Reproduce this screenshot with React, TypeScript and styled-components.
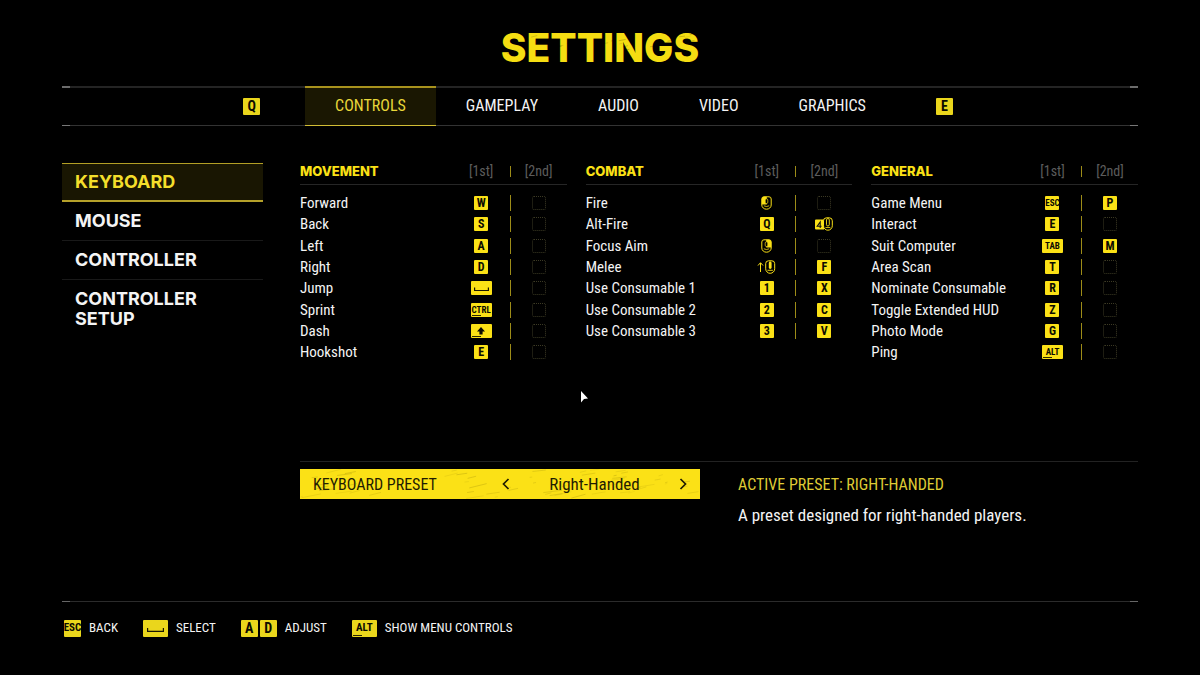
import React from 'react';
import styled, { createGlobalStyle, css } from 'styled-components';

const YELLOW = '#fbe116';
const GOLD = '#ead61c';
const CONDENSED = '"Roboto Condensed", Roboto, "Liberation Sans", sans-serif';
const WIDE = 'Inter, "Liberation Sans", sans-serif';

const rule = (y: string, h: number, tone: string, end: string) =>
  `linear-gradient(90deg, ${end} 8px, ${tone} 8px, ${tone} calc(100% - 8px), ${end} calc(100% - 8px)) 0 ${y} / 100% ${h}px no-repeat`;

const GlobalStyle = createGlobalStyle`
  * { box-sizing: border-box; }
  body { margin: 0; background: #000; color: #f4f4f4; font-family: ${CONDENSED}; }
  button { font: inherit; color: inherit; background: none; border: 0; padding: 0; cursor: pointer; }
`;

const Page = styled.div`
  position: relative;
  display: flex;
  flex-direction: column;
  min-height: 100vh;
  padding: 0 62px;
`;

const TitleBar = styled.header`
  display: flex;
  justify-content: center;
  align-items: center;
  height: 86px;
  padding-top: 10px;
`;

const Title = styled.h1`
  position: relative;
  margin: 0;
  font: 800 39px/48px ${WIDE};
  color: #f5dd12;
`;

const Texture = styled.svg`
  position: absolute;
  inset: 0;
  width: 100%;
  height: 100%;
  pointer-events: none;
`;

const TopNav = styled.nav`
  display: flex;
  justify-content: center;
  align-items: center;
  height: 40px;
  padding-right: 4px;
  background: ${rule('top', 2, '#242424', '#6c6c6c')}, ${rule('bottom', 1, '#333', '#777')};
`;

const TabList = styled.div`
  display: flex;
  align-self: stretch;
  margin: 0 40px 0 45px;
`;

const Tab = styled.button<{ $active?: boolean }>`
  padding: 0 30px 2px;
  font-size: 16px;
  line-height: 20px;
  border-top: 2px solid transparent;
  border-bottom: 1px solid transparent;
  ${(p) =>
    p.$active &&
    css`
      color: #e9d83a;
      background: #1a1702;
      border-top-color: #a8921d;
      border-bottom-color: #d2bd35;
    `}
`;

const Main = styled.main`
  display: grid;
  grid-template-columns: 201px minmax(0, 1fr);
  column-gap: 37px;
  padding-top: 33px;
`;

const SideNav = styled.nav`
  display: flex;
  flex-direction: column;
  padding-top: 4px;
`;

const SideItem = styled.button<{ $active?: boolean }>`
  padding: 9px 60px 9px 13px;
  font: 700 18px/20px ${WIDE};
  text-align: left;
  border-bottom: 1px solid #191919;
  &:last-child { border-bottom: 0; }
  ${(p) =>
    p.$active &&
    css`
      padding-top: 8px;
      padding-bottom: 8px;
      color: #f3de2b;
      background: #191602;
      border-top: 1px solid #b39f25;
      border-bottom: 2px solid #b5a12a;
    `}
`;

const Content = styled.div`
  display: flex;
  flex-direction: column;
`;

const BindingGrid = styled.section`
  display: grid;
  grid-template-columns: repeat(3, minmax(0, 1fr));
  align-items: start;
  column-gap: 19px;
  min-height: 302px;
`;

const BindingTable = styled.table`
  width: 100%;
  table-layout: fixed;
  border-collapse: collapse;
  font-size: 14px;
  line-height: 16px;
  th, td { padding: 0; }
  thead tr { height: 25px; border-bottom: 1px solid #262626; }
  tbody::before { content: ''; display: block; height: 8px; }
`;

const GroupName = styled.th`
  font: 800 13px/16px ${WIDE};
  text-align: left;
  color: ${YELLOW};
`;

const SlotHead = styled.th<{ $last?: boolean }>`
  width: ${(p) => (p.$last ? 56 : 57)}px;
  font-weight: 400;
  text-align: center;
  color: #5c5c5c;
`;

const DividerHead = styled.th`
  width: 1px;
`;

const Divider = styled.span<{ $short?: boolean }>`
  display: block;
  width: 1px;
  height: ${(p) => (p.$short ? 11 : 16)}px;
  background: #9d8c18;
`;

const BindingRow = styled.tr`
  height: 21px;
  &:nth-child(3n) { height: 22px; }
`;

const ActionName = styled.th`
  font-size: 15px;
  font-weight: 400;
  text-align: left;
  white-space: nowrap;
`;

const SlotButton = styled.button`
  display: flex;
  justify-content: center;
  align-items: center;
  width: 100%;
  height: 21px;
`;

const EmptySlot = styled.span`
  width: 14px;
  height: 14px;
  border: 1px dotted #3c3a24;
  border-radius: 2px;
`;

const capFont = (small?: boolean, large?: boolean) => (small ? (large ? 11 : 9) : large ? 14 : 12);

const Cap = styled.kbd<{ $wide?: boolean; $large?: boolean; $small?: boolean }>`
  position: relative;
  display: inline-flex;
  justify-content: center;
  align-items: center;
  width: ${(p) => (p.$wide ? (p.$large ? 25 : 21) : p.$large ? 17 : 14)}px;
  height: ${(p) => (p.$large ? 17 : 14)}px;
  border-radius: 1px;
  background: ${(p) => (p.$large ? GOLD : YELLOW)};
  color: #0c0b00;
  font: 700 ${(p) => capFont(p.$small, p.$large)}px/14px ${CONDENSED};
  svg { display: block; }
`;

const Underscore = styled.i`
  position: absolute;
  left: 1px;
  bottom: 1px;
  width: 9px;
  height: 1px;
  background: #2a2600;
`;

const Preset = styled.section`
  display: grid;
  grid-template-columns: minmax(0, 400px) minmax(0, 1fr);
  align-items: start;
  column-gap: 38px;
  padding-top: 7px;
  border-top: 1px solid #222;
  font-size: 17px;
  line-height: 31px;
`;

const PresetBar = styled.div`
  position: relative;
  display: flex;
  justify-content: space-between;
  height: 30px;
  padding: 0 9px 0 13px;
  background: ${YELLOW};
  color: #1f1c02;
`;

const PresetLabel = styled.span`
  font-size: 16px;
`;

const PresetPicker = styled.div`
  display: flex;
  justify-content: space-between;
  align-items: center;
  width: 193px;
`;

const Arrow = styled.button`
  display: flex;
  justify-content: center;
  width: 16px;
`;

const PresetHeading = styled.h2`
  margin: 0;
  font-size: 16px;
  font-weight: 400;
  color: #dfcb35;
`;

const PresetText = styled.p`
  margin: 0;
`;

const Footer = styled.footer`
  display: flex;
  align-items: center;
  gap: 25px;
  height: 74px;
  margin-top: auto;
  padding: 0 2px 20px;
  background: ${rule('top', 1, '#2b2b2b', '#666')};
`;

const FooterAction = styled.button`
  display: flex;
  align-items: center;
  gap: 8px;
  font-size: 13px;
  line-height: 18px;
`;

const CapPair = styled.span`
  display: flex;
  gap: 2px;
`;

const Pointer = styled.svg`
  position: absolute;
  left: 580px;
  top: 390px;
  pointer-events: none;
`;

/* Worn-print marks, laid out by a small repeatable generator. */
function Scratches({ seed, count, w, h, color, max }: { seed: number; count: number; w: number; h: number; color: string; max: number }) {
  let s = seed;
  const next = () => {
    s = (s * 16807) % 2147483647;
    return s / 2147483647;
  };
  const marks = Array.from({ length: count }, () => {
    const x = next() * w;
    const y = next() * h;
    const len = 2 + next() * max;
    return { x, y, x2: x + len, y2: y - len * (0.1 + next() * 0.2), o: 0.08 + next() * 0.22 };
  });
  return (
    <Texture viewBox={`0 0 ${w} ${h}`} preserveAspectRatio="none" aria-hidden="true">
      {marks.map((m, i) => (
        <line key={i} x1={m.x} y1={m.y} x2={m.x2} y2={m.y2} stroke={color} strokeOpacity={m.o} strokeWidth={0.7} />
      ))}
    </Texture>
  );
}

function SpaceGlyph({ large }: { large?: boolean }) {
  return (
    <svg width={large ? 17 : 15} height="14" viewBox={large ? '0 0 17 14' : '0 0 15 14'} fill="none" stroke="#1a1700" strokeWidth="1.2">
      <path d={large ? 'M.6 7v3.4h15.8V7' : 'M.6 6.5v3h13.8v-3'} />
    </svg>
  );
}

function MouseShape({ fill }: { fill: 'left' | 'right' }) {
  return (
    <svg width="11" height="14" viewBox="0 0 11 14" fill="none" stroke={YELLOW}>
      <path d="M3 .8h5a2.2 2.2 0 0 1 2.2 2.2v6a4.7 4.2 0 0 1-9.400 0V3A2.2 2.2 0 0 1 3 .8z" />
      {fill === 'left' ? (
        <path d="M.8 8.500V3A2.200 2.200 0 0 1 3 .8h2.800v7.700z" fill={YELLOW} stroke="none" />
      ) : (
        <path d="M10.200 8.500V3A2.200 2.200 0 0 0 8 .8H5.200v7.700z" fill={YELLOW} stroke="none" />
      )}
      <rect x="4.200" y="2.800" width="2.600" height="4.700" rx="1.300" fill="#000" strokeWidth=".7" />
      <path d="M2.800 9.800q2.700 1.400 5.400 0" strokeWidth=".8" />
    </svg>
  );
}

function MouseThumb() {
  return (
    <svg width="18" height="14" viewBox="0 0 18 14">
      <path d="M1 2.500H9v10H1A1 1 0 0 1 0 11.500V3.500A1 1 0 0 1 1 2.500z" fill={YELLOW} />
      <path d="M5.200 11V5L2.200 9.200H6.600" fill="none" stroke="#111" strokeWidth="1.100" />
      <path d="M11.500.8h2.800a3 3 0 0 1 3 3v5a4.400 4.400 0 0 1-8.800 0v-5A3 3 0 0 1 11.500.8z" fill="#000" stroke={YELLOW} />
      <rect x="11.500" y="1.500" width="2.800" height="7.500" rx="1.400" fill="none" stroke={YELLOW} strokeWidth=".9" />
      <path d="M10.500 10.500h4.800" stroke={YELLOW} strokeWidth=".8" />
    </svg>
  );
}

function WheelUp() {
  return (
    <svg width="19" height="14" viewBox="0 0 19 14" fill="none" stroke={YELLOW}>
      <path d="M3.500 12V3M1 5.500l2.500-2.800L6 5.500" />
      <path d="M11.500.8h3.400a2.800 2.800 0 0 1 2.800 2.800v5.200a4.500 4.500 0 0 1-9 0V3.600A2.800 2.800 0 0 1 11.500.8z" />
      <rect x="11.800" y="1.500" width="2.800" height="7.500" rx="1.400" fill={YELLOW} stroke="none" />
      <path d="M10.500 10.300h5.400" strokeWidth=".9" />
    </svg>
  );
}

function Binding({ name, large }: { name: string; large?: boolean }) {
  switch (name) {
    case '':
      return <EmptySlot />;
    case 'SPACE':
      return <Cap $wide $large={large} aria-label="Space"><SpaceGlyph large={large} /></Cap>;
    case 'SHIFT':
      return (
        <Cap $wide aria-label="Shift">
          <svg width="8" height="8" viewBox="0 0 8 8"><path d="M4 0l4 4.400H5.600V7.500H2.400V4.400H0z" fill="#0c0b00" /></svg>
          <Underscore />
        </Cap>
      );
    case 'CTRL':
    case 'ALT':
      return <Cap $wide $small $large={large}>{name}<Underscore /></Cap>;
    case 'TAB':
      return <Cap $wide $small>{name}</Cap>;
    case 'ESC':
      return <Cap $small $large={large}>{name}</Cap>;
    case 'MOUSE_LEFT':
      return <MouseShape fill="left" />;
    case 'MOUSE_RIGHT':
      return <MouseShape fill="right" />;
    case 'MOUSE_4':
      return <MouseThumb />;
    case 'WHEEL_UP':
      return <WheelUp />;
    default:
      return <Cap $large={large}>{name}</Cap>;
  }
}

type Row = [action: string, first: string, second: string];

const groups: { title: string; rows: Row[] }[] = [
  {
    title: 'MOVEMENT',
    rows: [
      ['Forward', 'W', ''], ['Back', 'S', ''], ['Left', 'A', ''], ['Right', 'D', ''],
      ['Jump', 'SPACE', ''], ['Sprint', 'CTRL', ''], ['Dash', 'SHIFT', ''], ['Hookshot', 'E', ''],
    ],
  },
  {
    title: 'COMBAT',
    rows: [
      ['Fire', 'MOUSE_LEFT', ''], ['Alt-Fire', 'Q', 'MOUSE_4'], ['Focus Aim', 'MOUSE_RIGHT', ''], ['Melee', 'WHEEL_UP', 'F'],
      ['Use Consumable 1', '1', 'X'], ['Use Consumable 2', '2', 'C'], ['Use Consumable 3', '3', 'V'],
    ],
  },
  {
    title: 'GENERAL',
    rows: [
      ['Game Menu', 'ESC', 'P'], ['Interact', 'E', ''], ['Suit Computer', 'TAB', 'M'], ['Area Scan', 'T', ''],
      ['Nominate Consumable', 'R', ''], ['Toggle Extended HUD', 'Z', ''], ['Photo Mode', 'G', ''], ['Ping', 'ALT', ''],
    ],
  },
];

const tabs = ['CONTROLS', 'GAMEPLAY', 'AUDIO', 'VIDEO', 'GRAPHICS'];
const sections = ['KEYBOARD', 'MOUSE', 'CONTROLLER', 'CONTROLLER SETUP'];
const hints = [
  { keys: ['ESC'], label: 'BACK' },
  { keys: ['SPACE'], label: 'SELECT' },
  { keys: ['A', 'D'], label: 'ADJUST' },
  { keys: ['ALT'], label: 'SHOW MENU CONTROLS' },
];

export default function App() {
  return (
    <Page>
      <GlobalStyle />
      <TitleBar>
        <Title>
          SETTINGS
          <Scratches seed={91} count={60} w={200} h={48} color="#000" max={6} />
        </Title>
      </TitleBar>

      <TopNav aria-label="Settings categories">
        <Cap $large>Q</Cap>
        <TabList role="tablist">
          {tabs.map((t, i) => (
            <Tab key={t} role="tab" aria-selected={i === 0} $active={i === 0}>{t}</Tab>
          ))}
        </TabList>
        <Cap $large>E</Cap>
      </TopNav>

      <Main>
        <SideNav aria-label="Controls sections">
          {sections.map((s, i) => (
            <SideItem key={s} $active={i === 0}>{s}</SideItem>
          ))}
        </SideNav>

        <Content>
          <BindingGrid>
            {groups.map((g) => (
              <BindingTable key={g.title}>
                <thead>
                  <tr>
                    <GroupName scope="col">{g.title}</GroupName>
                    <SlotHead scope="col">[1st]</SlotHead>
                    <DividerHead><Divider $short /></DividerHead>
                    <SlotHead scope="col" $last>[2nd]</SlotHead>
                  </tr>
                </thead>
                <tbody>
                  {g.rows.map(([action, first, second]) => (
                    <BindingRow key={action}>
                      <ActionName scope="row">{action}</ActionName>
                      <td><SlotButton aria-label={`${action}, first binding`}><Binding name={first} /></SlotButton></td>
                      <td><Divider /></td>
                      <td><SlotButton aria-label={`${action}, second binding`}><Binding name={second} /></SlotButton></td>
                    </BindingRow>
                  ))}
                </tbody>
              </BindingTable>
            ))}
          </BindingGrid>

          <Preset>
            <PresetBar role="group" aria-labelledby="preset-label">
              <Scratches seed={4711} count={60} w={400} h={30} color="#6b5c00" max={18} />
              <PresetLabel id="preset-label">KEYBOARD PRESET</PresetLabel>
              <PresetPicker>
                <Arrow aria-label="Previous preset">
                  <svg width="8" height="12" viewBox="0 0 8 12" fill="none" stroke="currentColor" strokeWidth="1.700"><path d="M6.500 1L1.500 6l5 5" /></svg>
                </Arrow>
                <output>Right-Handed</output>
                <Arrow aria-label="Next preset">
                  <svg width="8" height="12" viewBox="0 0 8 12" fill="none" stroke="currentColor" strokeWidth="1.700"><path d="M1.500 1l5 5-5 5" /></svg>
                </Arrow>
              </PresetPicker>
            </PresetBar>
            <div>
              <PresetHeading>ACTIVE PRESET: RIGHT-HANDED</PresetHeading>
              <PresetText>A preset designed for right-handed players.</PresetText>
            </div>
          </Preset>
        </Content>
      </Main>

      <Footer>
        {hints.map((h) => (
          <FooterAction key={h.label}>
            <CapPair>{h.keys.map((k) => <Binding key={k} name={k} large />)}</CapPair>
            {h.label}
          </FooterAction>
        ))}
      </Footer>

      <Pointer width="9" height="14" viewBox="0 0 9 14" aria-hidden="true">
        <path d="M1 1l7 7.500-4 .5-3 3.500z" fill="#fff" />
      </Pointer>
    </Page>
  );
}
